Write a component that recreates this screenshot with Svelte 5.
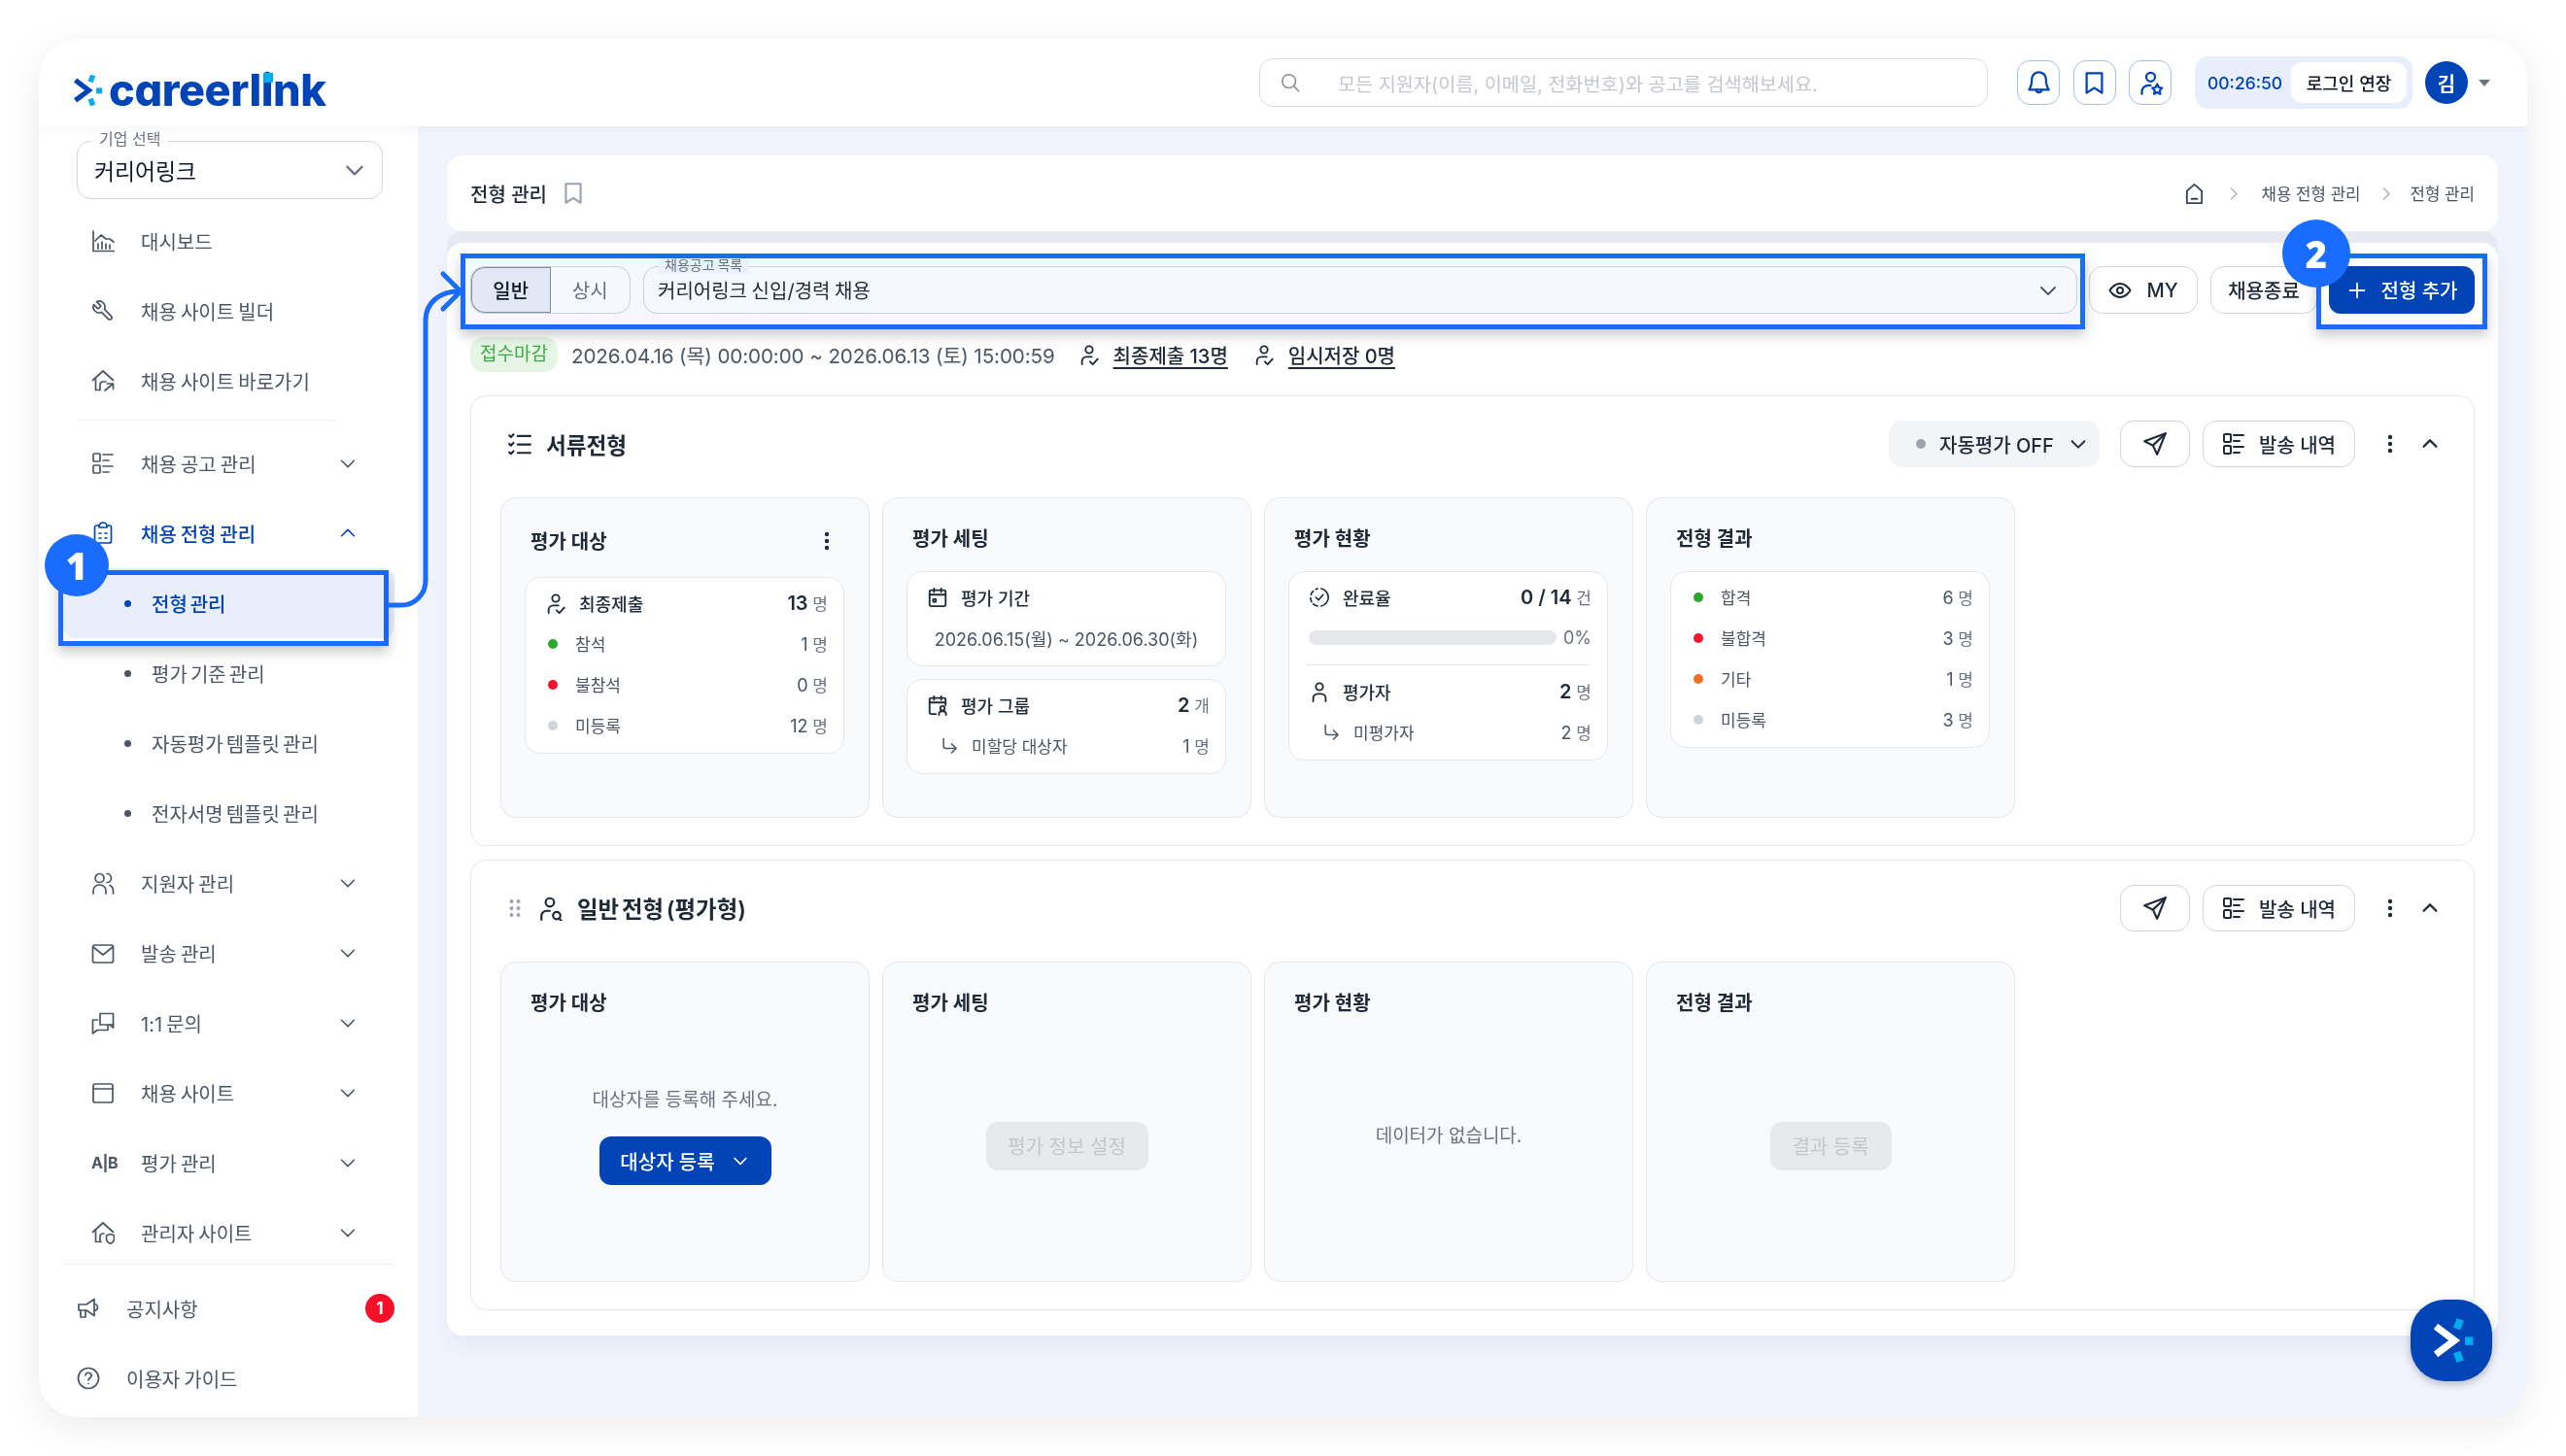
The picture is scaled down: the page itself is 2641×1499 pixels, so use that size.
<script>
  const icons = {
    chart: ['M2 2v20.5h22', 'M4 12l6-6 5 4h4l4 3', 'M7 20v-5M11 20v-7M15 20v-5M19 20v-4'],
    wrench: ['M9.3 6.3a1 1 0 0 1 0 1.4l-1.6 1.6a1 1 0 0 1-1.4 0L2.53 5.53a6 6 0 0 0 7.94 7.94l6.91 6.91a2.12 2.12 0 0 0 3-3l-6.91-6.91a6 6 0 0 0-7.94-7.94l3.76 3.76z'],
    homeLink: ['M1.5 11.5L12 2l10.5 9.5', 'M4.5 9.5V21.5H9', 'M9 21v-5a3 3 0 0 1 3-3h3', 'M14 22l8-6.5', 'M16.5 15H22.5v5.5'],
    list: ['M3 2h5a1 1 0 0 1 1 1v6a1 1 0 0 1-1 1H3a1 1 0 0 1-1-1V3a1 1 0 0 1 1-1z', 'M3 14h5a1 1 0 0 1 1 1v6a1 1 0 0 1-1 1H3a1 1 0 0 1-1-1v-6a1 1 0 0 1 1-1z', 'M12 3h10M12 9h6M12 15h10M12 21h6'],
    clipboard: ['M8 4H5.5a2 2 0 0 0-2 2v14a2 2 0 0 0 2 2h13a2 2 0 0 0 2-2V6a2 2 0 0 0-2-2H16', 'M8 6V5a4 4 0 0 1 8 0v1z', 'M8 12h2M14 12h2M8 17h2M14 17h2'],
    users: ['M4 7a4.5 4.5 0 1 0 9 0a4.5 4.5 0 1 0-9 0z', 'M2 23v-3a6 6 0 0 1 6-6h1a6 6 0 0 1 6 6v3', 'M16 2.5a4.5 4.5 0 0 1 0 9', 'M19 14.5a6 6 0 0 1 3.5 5.500V23'],
    mail: ['M3.500 4h17a2 2 0 0 1 2 2v14a2 2 0 0 1-2 2h-17a2 2 0 0 1-2-2V6a2 2 0 0 1 2-2z', 'M2 6l10 8 10-8'],
    chat: ['M9 2.500h13.500v11.500H9z', 'M6.500 9H1.500v14l4.500-3.500h11V15', 'M19 14l3.500 3V13'],
    window: ['M4 3h16a2 2 0 0 1 2 2v15a2 2 0 0 1-2 2H4a2 2 0 0 1-2-2V5a2 2 0 0 1 2-2z', 'M2 8h20'],
    homeShield: ['M1.500 11.500L12 2l10.500 9.500', 'M4.500 9.500V21.500H10', 'M9 21v-5a3 3 0 0 1 3-3h1', 'M15.500 15l4-1.500 4 1.500v3.500c0 2.500-2 4-4 5-2-1-4-2.500-4-5z'],
    mega: ['M2 8h8l8-5.500v17L10 14H2z', 'M4 14v7h5v-7', 'M18 7.500a3.500 3.500 0 0 1 0 7'],
    help: ['M12 1.500a10.500 10.500 0 1 0 0 21 10.500 10.500 0 0 0 0-21z', 'M9 9a3 3 0 0 1 6 .5c0 2-3 2.500-3 4.500', 'M12 17.500h.01'],
    chevron: ['M5 9l7 7 7-7'],
    chevronUp: ['M5 15l7-7 7 7'],
    right: ['M9 4l8 8-8 8'],
    search: ['M3 10.500a7.500 7.500 0 1 0 15 0a7.500 7.500 0 1 0-15 0z', 'M16 16l5.500 5.500'],
    bell: ['M12 2a6.500 6.500 0 0 1 6.500 6.500c0 5 1 7.500 2.500 9.500H3c1.500-2 2.500-4.500 2.500-9.500A6.500 6.500 0 0 1 12 2z', 'M9.500 18a2.500 2.500 0 0 0 5 0'],
    bookmark: ['M5 3h14v18l-7-4.500L5 21z'],
    userStar: ['M8 6.500a4 4 0 1 0 8 0a4 4 0 1 0-8 0z', 'M4 22v-2a6 6 0 0 1 6-6h2', 'M18 13l1.500 3 3 .5-2.200 2.200.5 3.300-2.800-1.500-2.800 1.500.5-3.300-2.200-2.200 3-.5z'],
    home: ['M12 2l8 7v13H4V9z', 'M9 17.500h6'],
    eye: ['M1.500 12S5.500 5 12 5s10.500 7 10.500 7-4 7-10.500 7S1.500 12 1.500 12z', 'M9 12a3 3 0 1 0 6 0a3 3 0 1 0-6 0z'],
    plus: ['M12 4v16M4 12h16'],
    send: ['M22 2L2 9.500l8 4 4 8.500z', 'M22 2L10 13.500'],
    checklist: ['M2 4l1.500 1.500L6 3M2 12l1.500 1.500L6 11M2 20l1.500 1.500L6 19', 'M10 4.500h12M10 12.500h12M10 20.500h12'],
    person: ['M8 6.500a4 4 0 1 0 8 0a4 4 0 1 0-8 0z', 'M5 23v-3.500a5 5 0 0 1 5-5h4a5 5 0 0 1 5 5V23'],
    personCheck: ['M8 6.500a4 4 0 1 0 8 0a4 4 0 1 0-8 0z', 'M4 23v-3.500a5 5 0 0 1 5-5h6', 'M13 20l3 3 5.500-6'],
    personSearch: ['M7 6.500a4 4 0 1 0 8 0a4 4 0 1 0-8 0z', 'M3 23v-3.500a5 5 0 0 1 5-5h3', 'M14 19a3.500 3.500 0 1 0 7 0a3.500 3.500 0 1 0-7 0z', 'M20 22l2 2'],
    calendar: ['M5 4h14a2 2 0 0 1 2 2v14a2 2 0 0 1-2 2H5a2 2 0 0 1-2-2V6a2 2 0 0 1 2-2z', 'M3 9h18', 'M8 2v4M16 2v4', 'M7 14h3v3H7z'],
    calendarUser: ['M10 22H5a2 2 0 0 1-2-2V6a2 2 0 0 1 2-2h14a2 2 0 0 1 2 2v6', 'M3 9h18', 'M8 2v4M16 2v4', 'M15 15.500a2.500 2.500 0 1 0 5 0a2.500 2.500 0 1 0-5 0z', 'M13.500 23v-1a3 3 0 0 1 3-3h2a3 3 0 0 1 3 3v1'],
    corner: ['M5 3v9a3 3 0 0 0 3 3h12', 'M15 9.500l5.500 5.500-5.500 5.500'],
    progress: ['M14 2.200a10 10 0 0 1 0 19.600', 'M10 2.200a10 10 0 0 0-2 .8M5 5a10 10 0 0 0-2.500 4M2 12.500a10 10 0 0 0 1.200 4.500M5 19.500a10 10 0 0 0 5 2.300', 'M8 12l3 3 5-6']
  };

  const menu1 = [
    { icon: 'chart', label: '대시보드' },
    { icon: 'wrench', label: '채용 사이트 빌더' },
    { icon: 'homeLink', label: '채용 사이트 바로가기' }
  ];
  const menu2 = [
    { icon: 'users', label: '지원자 관리' },
    { icon: 'mail', label: '발송 관리' },
    { icon: 'chat', label: '1:1 문의' },
    { icon: 'window', label: '채용 사이트' },
    { icon: 'ab', label: '평가 관리' },
    { icon: 'homeShield', label: '관리자 사이트' }
  ];
  const subMenu = ['전형 관리', '평가 기준 관리', '자동평가 템플릿 관리', '전자서명 템플릿 관리'];

  const targetRows = [
    { color: '#2ea62e', label: '참석', value: 1 },
    { color: '#f5142d', label: '불참석', value: 0 },
    { color: '#d1d5db', label: '미등록', value: 12 }
  ];
  const resultRows = [
    { color: '#2ea62e', label: '합격', value: 6 },
    { color: '#f5142d', label: '불합격', value: 3 },
    { color: '#f07020', label: '기타', value: 1 },
    { color: '#d1d5db', label: '미등록', value: 3 }
  ];
</script>

{#snippet ic(name, size = 24, sw = 2)}
  <svg class="ic" width={size} height={size} viewBox="0 0 24 24" fill="none" stroke="currentColor" stroke-width={sw} stroke-linecap="round" stroke-linejoin="round">
    {#each icons[name] as d}<path {d} />{/each}
  </svg>
{/snippet}

{#snippet kebab(cls = '')}
  <svg class="kebab {cls}" width="6" height="20" viewBox="0 0 6 20" fill="currentColor">
    <circle cx="3" cy="3" r="2.200" /><circle cx="3" cy="10" r="2.200" /><circle cx="3" cy="17" r="2.200" />
  </svg>
{/snippet}

{#snippet mark(arrow, tick)}
  <svg viewBox="0 0 36 40" width="100%" height="100%">
    <path d="M3 8l16 12L3 32" fill="none" stroke={arrow} stroke-width="6" />
    <path d="M21 1l6 2-3 8-6-2zM18 31l6-2 3 8-6 2z" fill={tick} />
    <rect x="28" y="17" width="7" height="7" fill={tick} />
  </svg>
{/snippet}

{#snippet sendBtns()}
  <button class="btn square">{@render ic('send', 26, 2)}</button>
  <button class="btn history">{@render ic('list', 24, 2)}<span>발송 내역</span></button>
  <span class="kb">{@render kebab()}</span>
  <span class="collapse">{@render ic('chevronUp', 22, 2.500)}</span>
{/snippet}

<div class="page">
  <div class="win">
    <header class="top">
      <div class="logo">
        <span class="logo-mark">{@render mark('#0044b8', '#00adef')}</span>
        <span class="logo-text">careerlink</span>
        <span class="logo-dot"></span>
      </div>
      <div class="search">
        {@render ic('search', 22, 1.700)}
        <span>모든 지원자(이름, 이메일, 전화번호)와 공고를 검색해보세요.</span>
      </div>
      <div class="top-icons">
        <button class="top-btn">{@render ic('bell', 27, 2)}</button>
        <button class="top-btn">{@render ic('bookmark', 27, 2)}</button>
        <button class="top-btn">{@render ic('userStar', 27, 2)}</button>
      </div>
      <div class="timer">
        <span class="time">00:26:50</span>
        <button class="extend">로그인 연장</button>
      </div>
      <span class="avatar">김</span>
      <span class="caret"></span>
    </header>

    <aside class="side">
      <div class="company">
        <span class="company-label">기업 선택</span>
        <span>커리어링크</span>
        {@render ic('chevron', 26, 2.200)}
      </div>
      <nav class="nav">
        {#each menu1 as m}
          <div class="item">{@render ic(m.icon, 24, 1.700)}<span>{m.label}</span></div>
        {/each}
        <div class="rule first"></div>
        <div class="item">{@render ic('list', 24, 1.700)}<span>채용 공고 관리</span><span class="arrow">{@render ic('chevron', 22, 1.700)}</span></div>
        <div class="item on">{@render ic('clipboard', 24, 1.700)}<span>채용 전형 관리</span><span class="arrow">{@render ic('chevronUp', 22, 1.700)}</span></div>
        {#each subMenu as s, i}
          <div class="sub" class:active={i === 0}><i></i><span>{s}</span></div>
        {/each}
        {#each menu2 as m}
          <div class="item">
            {#if m.icon === 'ab'}<span class="ab">A|B</span>{:else}{@render ic(m.icon, 24, 1.700)}{/if}
            <span>{m.label}</span>
            <span class="arrow">{@render ic('chevron', 22, 1.700)}</span>
          </div>
        {/each}
      </nav>
      <div class="rule second"></div>
      <div class="item lower">{@render ic('mega', 24, 1.700)}<span>공지사항</span><span class="count">1</span></div>
      <div class="item lower">{@render ic('help', 24, 1.700)}<span>이용자 가이드</span></div>
    </aside>

    <main class="main">
      <div class="crumbs">
        <span class="crumb-title">전형 관리</span>
        <span class="crumb-mark">{@render ic('bookmark', 26, 2)}</span>
        <div class="trail">
          {@render ic('home', 23, 1.900)}
          <span class="sep wide">{@render ic('right', 17, 1.500)}</span>
          <span>채용 전형 관리</span>
          <span class="sep">{@render ic('right', 17, 1.500)}</span>
          <span>전형 관리</span>
        </div>
      </div>

      <div class="board">
        <div class="tools">
          <div class="seg">
            <button class="seg-btn active">일반</button>
            <button class="seg-btn">상시</button>
          </div>
          <div class="posting">
            <span class="posting-label">채용공고 목록</span>
            <span>커리어링크 신입/경력 채용</span>
            {@render ic('chevron', 24, 1.800)}
          </div>
          <button class="btn my">{@render ic('eye', 24, 2)}<span>MY</span></button>
          <button class="btn close">채용종료</button>
          <button class="primary add">{@render ic('plus', 22, 2)}<span>전형 추가</span></button>
        </div>

        <div class="status">
          <span class="tag">접수마감</span>
          <span class="period">2026.04.16 (목) 00:00:00 ~ 2026.06.13 (토) 15:00:59</span>
          <span class="linkish">{@render ic('personCheck', 22, 2)}<u>최종제출 13명</u></span>
          <span class="linkish">{@render ic('personCheck', 22, 2)}<u>임시저장 0명</u></span>
        </div>

        <section class="stage">
          <div class="stage-head">
            <div class="stage-title">{@render ic('checklist', 26, 2)}<span>서류전형</span></div>
            <div class="stage-tools">
              <button class="auto"><i></i><span>자동평가 OFF</span>{@render ic('chevron', 22, 2)}</button>
              {@render sendBtns()}
            </div>
          </div>
          <div class="cards">
            <div class="card">
              <div class="card-title tall"><span>평가 대상</span>{@render kebab('card-kebab')}</div>
              <div class="box">
                <div class="row head">{@render ic('personCheck', 22, 2)}<span class="name">최종제출</span><span class="val"><b>13</b> 명</span></div>
                {#each targetRows as r}
                  <div class="row"><i class="dot" style="background:{r.color}"></i><span class="minor">{r.label}</span><span class="val"><em>{r.value}</em> 명</span></div>
                {/each}
              </div>
            </div>
            <div class="card">
              <div class="card-title"><span>평가 세팅</span></div>
              <div class="box">
                <div class="row head">{@render ic('calendar', 22, 2)}<span class="name">평가 기간</span></div>
                <div class="row range">2026.06.15(월) ~ 2026.06.30(화)</div>
              </div>
              <div class="box next">
                <div class="row head">{@render ic('calendarUser', 22, 2)}<span class="name">평가 그룹</span><span class="val"><b>2</b> 개</span></div>
                <div class="row nested">{@render ic('corner', 20, 1.800)}<span class="minor">미할당 대상자</span><span class="val"><em>1</em> 명</span></div>
              </div>
            </div>
            <div class="card">
              <div class="card-title"><span>평가 현황</span></div>
              <div class="box">
                <div class="row head">{@render ic('progress', 22, 1.800)}<span class="name">완료율</span><span class="val"><b>0 / 14</b> 건</span></div>
                <div class="row bar-row"><div class="bar"></div><span class="val">0%</span></div>
                <div class="divider"></div>
                <div class="row head">{@render ic('person', 22, 2)}<span class="name">평가자</span><span class="val"><b>2</b> 명</span></div>
                <div class="row nested">{@render ic('corner', 20, 1.800)}<span class="minor">미평가자</span><span class="val"><em>2</em> 명</span></div>
              </div>
            </div>
            <div class="card">
              <div class="card-title"><span>전형 결과</span></div>
              <div class="box">
                {#each resultRows as r}
                  <div class="row"><i class="dot" style="background:{r.color}"></i><span class="minor">{r.label}</span><span class="val"><em>{r.value}</em> 명</span></div>
                {/each}
              </div>
            </div>
          </div>
        </section>

        <section class="stage">
          <div class="stage-head">
            <div class="stage-title big">
              <svg class="grip" width="12" height="20" viewBox="0 0 12 20" fill="#9ca3af">
                <circle cx="2.500" cy="3" r="2" /><circle cx="9.500" cy="3" r="2" /><circle cx="2.500" cy="10" r="2" /><circle cx="9.500" cy="10" r="2" /><circle cx="2.500" cy="17" r="2" /><circle cx="9.500" cy="17" r="2" />
              </svg>
              {@render ic('personSearch', 26, 2)}<span>일반 전형 (평가형)</span>
            </div>
            <div class="stage-tools">{@render sendBtns()}</div>
          </div>
          <div class="cards">
            <div class="card">
              <div class="card-title"><span>평가 대상</span></div>
              <div class="blank pad-a">
                <p>대상자를 등록해 주세요.</p>
                <button class="primary enroll"><span>대상자 등록</span>{@render ic('chevron', 20, 2)}</button>
              </div>
            </div>
            <div class="card">
              <div class="card-title"><span>평가 세팅</span></div>
              <div class="blank pad-b"><button class="off wide">평가 정보 설정</button></div>
            </div>
            <div class="card">
              <div class="card-title"><span>평가 현황</span></div>
              <div class="blank pad-c"><p>데이터가 없습니다.</p></div>
            </div>
            <div class="card">
              <div class="card-title"><span>전형 결과</span></div>
              <div class="blank pad-b"><button class="off">결과 등록</button></div>
            </div>
          </div>
        </section>
      </div>
    </main>

    <!-- tutorial annotations laid over the screen -->
    <div class="hl hl-menu"></div>
    <div class="hl hl-tools"></div>
    <div class="hl hl-add"></div>
    <svg class="wire" viewBox="40 40 2561 1419" fill="none" stroke="#1a6cff" stroke-width="5" stroke-linecap="round" stroke-linejoin="round">
      <path d="M401 623h12a25 25 0 0 0 25-25V330c0-18 14-30 34-30" />
      <path d="M456 282l18 18-18 18" />
    </svg>
    <span class="num n1">1</span>
    <span class="num n2">2</span>
    <div class="fab">{@render mark('#fff', '#00adef')}</div>
  </div>
</div>

<style>
  :global(body) {
    margin: 0;
    background: #fff;
  }
  .page {
    width: 2641px;
    height: 1499px;
    padding: 40px;
    box-sizing: border-box;
    font-family: Inter, 'Noto Sans CJK KR', sans-serif;
    color: #1f2937;
  }
  .win {
    position: relative;
    width: 2561px;
    height: 1419px;
    display: grid;
    grid-template-columns: 390px 1fr;
    grid-template-rows: 90px 1fr;
    border-radius: 40px;
    overflow: hidden;
    background: #f1f4fc;
    box-shadow: 0 10px 40px rgba(0, 0, 0, 0.08);
  }
  .ic {
    flex: none;
    display: block;
  }
  button {
    font-family: inherit;
    cursor: pointer;
  }

  /* top bar */
  .top {
    grid-column: 1 / -1;
    display: flex;
    align-items: center;
    background: #fff;
    padding: 0 38px 0 35px;
    box-shadow: 0 2px 10px rgba(40, 60, 110, 0.05);
    z-index: 1;
  }
  .logo {
    position: relative;
    display: flex;
    align-items: center;
    gap: 6px;
    margin-right: auto;
    margin-top: 16px;
  }
  .logo-mark {
    width: 31px;
    height: 36px;
    display: block;
  }
  .logo-text {
    font-family: Inter, sans-serif;
    font-weight: 800;
    font-size: 45px;
    line-height: 50px;
    letter-spacing: -0.4px;
    color: #0044b8;
    font-feature-settings: 'cv11' 1;
  }
  .logo-dot {
    position: absolute;
    left: 196px;
    top: 7px;
    width: 10px;
    height: 10px;
    background: #00adef;
  }
  .search {
    width: 750px;
    height: 50px;
    box-sizing: border-box;
    display: flex;
    align-items: center;
    gap: 38px;
    padding-left: 20px;
    border: 1px solid #d9dce1;
    border-radius: 14px;
    color: #8b9098;
  }
  .search span {
    font-size: 19.7px;
    color: #c4c7cc;
  }
  .top-icons {
    display: flex;
    gap: 13.5px;
    margin-left: 30px;
  }
  .top-btn {
    width: 44px;
    height: 46px;
    display: grid;
    place-items: center;
    padding: 0;
    background: #fff;
    border: 1px solid #a9bfe6;
    border-radius: 13px;
    color: #0044b8;
  }
  .timer {
    display: flex;
    align-items: center;
    justify-content: space-between;
    width: 224px;
    height: 54px;
    box-sizing: border-box;
    margin-left: 24px;
    padding: 0 6px 0 13px;
    background: #e8eefb;
    border-radius: 14px;
  }
  .time {
    font-size: 17.500px;
    font-weight: 500;
    color: #0044b8;
  }
  .extend {
    width: 119px;
    height: 42px;
    padding: 0;
    border: 0;
    border-radius: 12px;
    background: #fff;
    font-size: 18px;
    font-weight: 500;
    color: #111827;
  }
  .avatar {
    width: 44px;
    height: 44px;
    margin-left: 13px;
    display: grid;
    place-items: center;
    border-radius: 50%;
    background: #0044b8;
    color: #fff;
    font-size: 20px;
    font-weight: 700;
  }
  .caret {
    margin-left: 11px;
    width: 0;
    height: 0;
    border: 6px solid transparent;
    border-top: 7px solid #6b7280;
    border-bottom: 0;
  }

  /* sidebar */
  .side {
    position: relative;
    background: #fff;
    padding: 15px 24px 0 24px;
    color: #4b5563;
  }
  .company {
    position: relative;
    display: flex;
    align-items: center;
    justify-content: space-between;
    width: 315px;
    height: 60px;
    box-sizing: border-box;
    margin-left: 15px;
    padding: 0 15px 0 17px;
    border: 1px solid #d1d5db;
    border-radius: 14px;
    font-size: 22.800px;
    color: #111827;
  }
  .company .ic {
    color: #6b7280;
  }
  .company-label {
    position: absolute;
    left: 14px;
    top: -13px;
    padding: 0 8px;
    background: #fff;
    font-size: 16px;
    line-height: 20px;
    color: #6b7280;
  }
  .nav {
    margin-top: 7px;
  }
  .item {
    display: flex;
    align-items: center;
    height: 72px;
    padding-left: 30px;
    font-size: 20px;
    word-spacing: -1.500px;
  }
  .item > .ic,
  .ab {
    width: 24px;
    margin-right: 27px;
  }
  .ab {
    flex: none;
    font-size: 16px;
    font-weight: 700;
    letter-spacing: -0.5px;
    white-space: nowrap;
  }
  .item.on {
    color: #0044b8;
    font-weight: 500;
  }
  .arrow {
    margin-left: auto;
    margin-right: 37px;
    color: #4b5563;
  }
  .item.on .arrow {
    color: #0044b8;
  }
  .sub {
    display: flex;
    align-items: center;
    height: 72px;
    padding-left: 64px;
    font-size: 20px;
    word-spacing: -2.500px;
  }
  .sub i {
    width: 7px;
    height: 7px;
    margin-right: 21px;
    border-radius: 50%;
    background: #4b5563;
  }
  .sub.active {
    margin-left: 1px;
    padding-left: 63px;
    background: #e8eefb;
    border-radius: 12px;
    color: #0044b8;
    font-weight: 500;
  }
  .sub.active i {
    background: #0044b8;
  }
  .rule {
    height: 1px;
    background: #eceef1;
  }
  .rule.first {
    margin: 4px 60px 8px 15px;
  }
  .rule.second {
    margin: -4px 0 9px 0;
  }
  .lower {
    padding-left: 15px;
  }
  .count {
    margin-left: auto;
    width: 30px;
    height: 30px;
    display: grid;
    place-items: center;
    border-radius: 50%;
    background: #f5102a;
    color: #fff;
    font-size: 17px;
    font-weight: 700;
  }

  /* main column */
  .main {
    padding: 30px 30px 0;
    min-width: 0;
  }
  .crumbs {
    display: flex;
    align-items: center;
    height: 78px;
    padding: 0 24px;
    background: #fff;
    border-radius: 16px;
    box-sizing: border-box;
  }
  .crumb-title {
    font-size: 20px;
    font-weight: 500;
    color: #1f2937;
  }
  .crumb-mark {
    margin-left: 14px;
    color: #9ca3af;
  }
  .trail {
    margin-left: auto;
    display: flex;
    align-items: center;
    gap: 17px;
    font-size: 16.800px;
    color: #4b5563;
  }
  .trail .ic {
    color: #374151;
  }
  .sep .ic {
    color: #9ca3af;
  }
  .sep.wide {
    margin: 0 3px;
  }
  .board {
    margin-top: 12px;
    height: 1125px;
    box-sizing: border-box;
    padding: 24px;
    background: #fff;
    border-radius: 16px;
    box-shadow: 0 -12px 0 #e6e9f2, 0 12px 20px rgba(40, 60, 110, 0.05);
  }
  .tools {
    display: flex;
    align-items: center;
    height: 49px;
  }
  .seg {
    display: flex;
    width: 165px;
    height: 49px;
    box-sizing: border-box;
    border: 1px solid #d1d5db;
    border-radius: 14px;
    overflow: hidden;
  }
  .seg-btn {
    flex: 1;
    border: 0;
    padding: 0;
    background: transparent;
    font-size: 20px;
    color: #6b7280;
  }
  .seg-btn.active {
    background: #eceff6;
    color: #111827;
    font-weight: 500;
    box-shadow: inset 0 0 0 1px #8b9098;
    border-radius: 14px 0 0 14px;
  }
  .posting {
    position: relative;
    display: flex;
    align-items: center;
    justify-content: space-between;
    width: 1476px;
    height: 49px;
    box-sizing: border-box;
    margin-left: 13px;
    padding: 0 17px 0 14px;
    border: 1px solid #d1d5db;
    border-radius: 14px;
    font-size: 20px;
    word-spacing: -1px;
    color: #1f2937;
  }
  .posting .ic {
    color: #4b5563;
  }
  .posting-label {
    position: absolute;
    left: 14px;
    top: -11px;
    padding: 0 7px;
    font-size: 14px;
    line-height: 18px;
    color: #6b7280;
    background: #f5f8ff;
  }
  .btn {
    display: flex;
    align-items: center;
    justify-content: center;
    height: 49px;
    box-sizing: border-box;
    padding: 0;
    background: #fff;
    border: 1px solid #d1d5db;
    border-radius: 14px;
    font-size: 20px;
    font-weight: 500;
    color: #1f2937;
  }
  .my {
    width: 112px;
    margin-left: 12px;
    gap: 15px;
  }
  .close {
    width: 110px;
    margin-left: 13px;
  }
  .primary {
    display: flex;
    align-items: center;
    justify-content: center;
    border: 0;
    padding: 0;
    background: #0044b8;
    color: #fff;
    border-radius: 12px;
    font-size: 20px;
    font-weight: 500;
  }
  .add {
    width: 150px;
    height: 49px;
    margin-left: 12px;
    gap: 14px;
  }
  .status {
    display: flex;
    align-items: center;
    height: 36px;
    margin-top: 24px;
    font-size: 20.600px;
    color: #4b5563;
  }
  .tag {
    height: 36px;
    line-height: 36px;
    padding: 0 10px;
    border-radius: 14px;
    background: #e6f5e6;
    color: #3dae3d;
    font-size: 19px;
  }
  .period {
    margin-left: 14px;
    letter-spacing: -0.1px;
  }
  .linkish {
    display: flex;
    align-items: center;
    gap: 14px;
    margin-left: 24px;
    color: #1f2937;
    font-size: 20px;
    font-weight: 500;
  }
  .linkish u {
    text-underline-offset: 4px;
  }
  .linkish + .linkish {
    margin-left: 26px;
  }

  /* stage sections */
  .stage {
    height: 464px;
    box-sizing: border-box;
    margin-top: 24px;
    padding: 25px 30px 30px;
    border: 1px solid #e5e7eb;
    border-radius: 16px;
  }
  .stage + .stage {
    margin-top: 14px;
  }
  .stage-head {
    display: flex;
    align-items: center;
    justify-content: space-between;
    height: 48px;
  }
  .stage-title {
    display: flex;
    align-items: center;
    gap: 14px;
    margin-left: 7px;
    font-size: 22.600px;
    font-weight: 600;
    color: #1f2937;
  }
  .stage-title.big {
    font-size: 23.400px;
    word-spacing: -3px;
    margin-left: 9px;
    gap: 14px;
  }
  .stage-title.big .grip {
    margin-right: 4px;
  }
  .stage-tools {
    display: flex;
    align-items: center;
    gap: 13px;
  }
  .auto {
    display: flex;
    align-items: center;
    height: 48px;
    width: 217px;
    box-sizing: border-box;
    padding: 0 11px 0 28px;
    margin-right: 8px;
    border: 0;
    background: #f3f4f6;
    border-radius: 14px;
    font-size: 20px;
    font-weight: 500;
    color: #1f2937;
  }
  .auto i {
    width: 10px;
    height: 10px;
    margin-right: 14px;
    border-radius: 50%;
    background: #9ca3af;
  }
  .auto .ic {
    margin-left: auto;
  }
  .square {
    width: 72px;
    height: 48px;
  }
  .history {
    width: 157px;
    height: 48px;
    gap: 14px;
  }
  .kb {
    margin-left: 20px;
    color: #1f2937;
    display: flex;
  }
  .collapse {
    margin-left: 14px;
    margin-right: 4px;
    color: #1f2937;
  }
  .cards {
    display: flex;
    gap: 13px;
    margin-top: 31px;
  }
  .card {
    display: flex;
    flex-direction: column;
    width: 380px;
    height: 330px;
    box-sizing: border-box;
    padding: 0 25px 0 24px;
    background: #f9fafc;
    border: 1px solid #e5e7eb;
    border-radius: 16px;
  }
  .card-title {
    flex: none;
    display: flex;
    align-items: center;
    justify-content: space-between;
    height: 75px;
    box-sizing: border-box;
    padding: 6px 15px 0 6px;
    font-size: 20px;
    font-weight: 600;
    color: #1f2937;
  }
  .card-title.tall {
    height: 81px;
  }
  .box {
    flex: none;
    padding: 4.500px 0 7.500px;
    background: #fff;
    border: 1px solid #e5e7eb;
    border-radius: 16px;
  }
  .box.next {
    margin-top: 13px;
  }
  .row {
    display: flex;
    align-items: center;
    height: 42px;
    padding: 0 16px 0 20px;
    font-size: 18px;
    color: #4b5563;
  }
  .row.head .ic {
    margin-right: 13px;
    color: #1f2937;
  }
  .name {
    color: #1f2937;
    font-weight: 500;
  }
  .val {
    margin-left: auto;
    font-size: 17px;
    color: #6b7280;
  }
  .val b {
    font-size: 20px;
    font-weight: 600;
    color: #1f2937;
  }
  .val em {
    font-style: normal;
    font-size: 18px;
    color: #4b5563;
  }
  .dot {
    width: 10px;
    height: 10px;
    margin: 0 18px 0 3px;
    border-radius: 50%;
  }
  .minor {
    font-size: 17px;
  }
  .range {
    justify-content: center;
    font-size: 18px;
    padding: 0;
  }
  .nested {
    padding-left: 33px;
  }
  .nested .ic {
    margin-right: 13px;
    color: #4b5563;
  }
  .bar-row .val {
    font-size: 18px;
  }
  .bar {
    width: 255px;
    height: 15px;
    border-radius: 8px;
    background: #e5e7eb;
  }
  .divider {
    height: 1px;
    margin: 6px 18px;
    background: #e5e7eb;
  }
  .blank {
    flex: 1;
    display: flex;
    flex-direction: column;
    align-items: center;
    justify-content: center;
    margin-left: 1px;
  }
  .blank p {
    margin: 0;
    font-size: 19px;
    color: #6b7280;
  }
  .pad-a {
    padding-bottom: 48px;
  }
  .pad-b {
    padding-bottom: 26px;
  }
  .pad-c {
    padding-bottom: 50px;
  }
  .enroll {
    width: 177px;
    height: 50px;
    margin-top: 26px;
    gap: 16px;
  }
  .off {
    width: 125px;
    height: 50px;
    padding: 0;
    border: 0;
    border-radius: 12px;
    background: #e8e9eb;
    color: #c4c6ca;
    font-size: 20px;
  }
  .off.wide {
    width: 167px;
  }

  /* annotations */
  .hl {
    position: absolute;
    box-sizing: border-box;
    border: 5px solid #1a6cff;
    box-shadow: 0 6px 12px rgba(0, 0, 0, 0.22);
    mix-blend-mode: multiply;
    pointer-events: none;
  }
  .hl-menu {
    left: 20px;
    top: 547px;
    width: 340px;
    height: 78px;
  }
  .hl-tools {
    left: 434px;
    top: 221px;
    width: 1672px;
    height: 78px;
    background: #f5f8ff;
  }
  .hl-add {
    left: 2344px;
    top: 221px;
    width: 176px;
    height: 78px;
  }
  .wire {
    position: absolute;
    left: 0;
    top: 0;
    width: 2561px;
    height: 1419px;
    pointer-events: none;
  }
  .num {
    position: absolute;
    display: grid;
    place-items: center;
    border-radius: 50%;
    background: #1a6cff;
    color: #fff;
    font-weight: 800;
    font-family: 'Open Sans', sans-serif;
  }
  .n1 {
    left: 6px;
    top: 510px;
    width: 66px;
    height: 64px;
    font-size: 38px;
  }
  .n2 {
    left: 2309px;
    top: 186px;
    width: 70px;
    height: 70px;
    font-size: 38px;
  }
  .fab {
    position: absolute;
    left: 2441px;
    top: 1298px;
    width: 84px;
    height: 84px;
    box-sizing: border-box;
    padding: 18px 16px 18px 20px;
    background: #0044b8;
    border-radius: 42%;
    box-shadow: 0 3px 8px rgba(0, 0, 40, 0.25);
  }
</style>
